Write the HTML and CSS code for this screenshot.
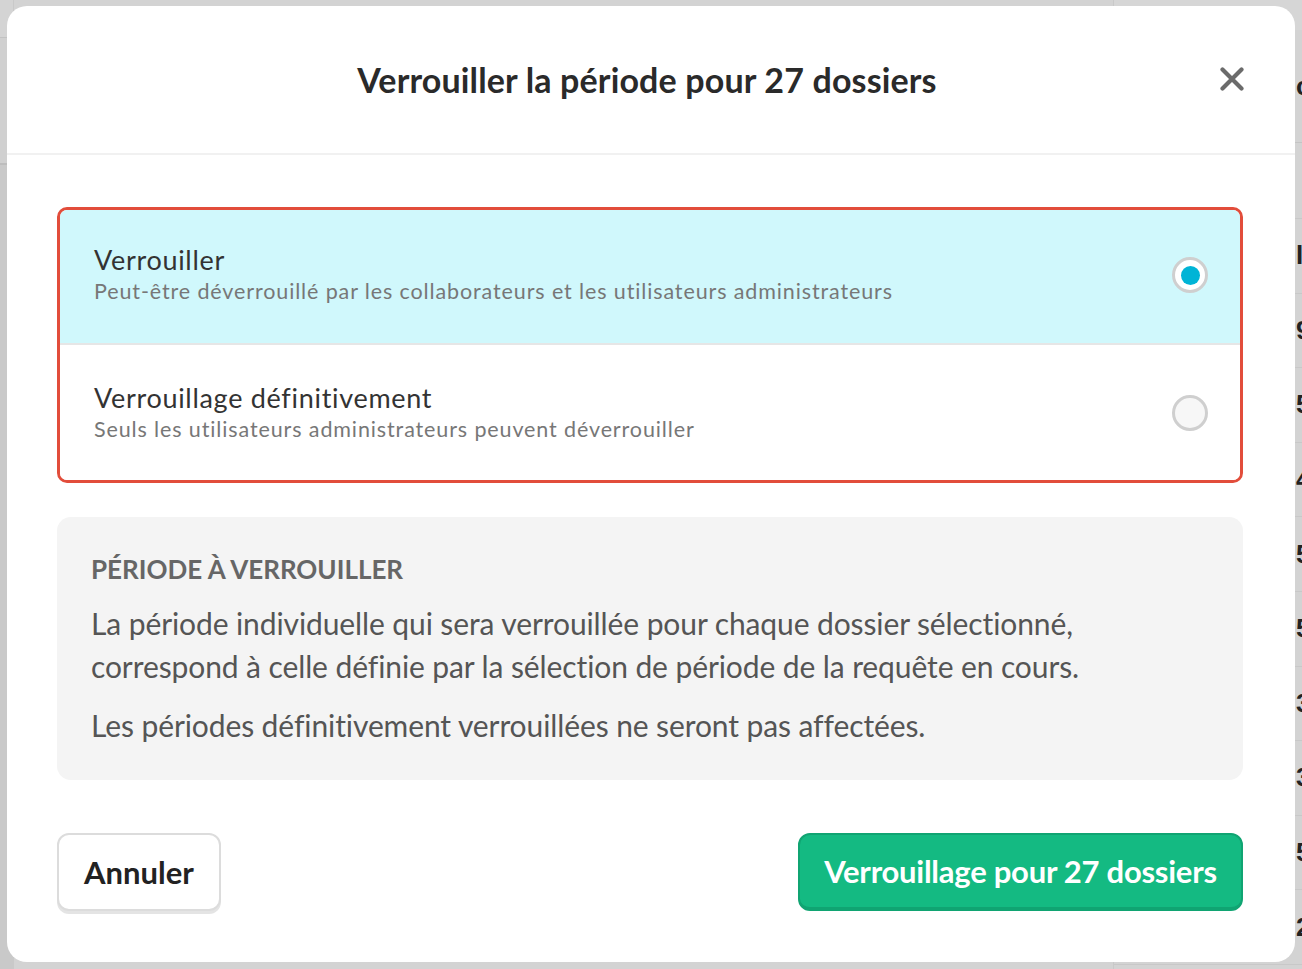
FILE: index.html
```html
<!DOCTYPE html>
<html lang="fr">
<head>
<meta charset="utf-8">
<title>Verrouiller la période</title>
<link rel="stylesheet" href="styles.css">
</head>
<body>
<div class="page-behind">
  <div class="behind-left">
    <div class="left-top"></div>
    <div class="left-mid"></div>
    <div class="left-rest"></div>
  </div>
  <div class="behind-table">
    <div class="behind-head"><span class="cell">c</span></div>
    <div class="behind-band"></div>
    <div class="behind-row"><span class="cell">l</span></div>
    <div class="behind-row"><span class="cell">9</span></div>
    <div class="behind-row"><span class="cell">5</span></div>
    <div class="behind-row"><span class="cell">4</span></div>
    <div class="behind-row"><span class="cell">5</span></div>
    <div class="behind-row"><span class="cell">5</span></div>
    <div class="behind-row"><span class="cell">3</span></div>
    <div class="behind-row"><span class="cell">3</span></div>
    <div class="behind-row"><span class="cell">5</span></div>
    <div class="behind-row"><span class="cell">2</span></div>
  </div>
</div>
<div class="modal" role="dialog">
  <header class="modal-header">
    <h1 class="modal-title">Verrouiller la période pour 27 dossiers</h1>
    <button class="close-btn" aria-label="Fermer">
      <svg width="24" height="24" viewBox="0 0 24 24"><path d="M2.5 2.5 L21.5 21.5 M21.5 2.5 L2.5 21.5" stroke="#6b6b6b" stroke-width="4.2" stroke-linecap="round"/></svg>
    </button>
  </header>
  <div class="modal-body">
    <div class="options">
      <label class="option selected">
        <div class="option-text">
          <div class="option-title">Verrouiller</div>
          <div class="option-sub">Peut-être déverrouillé par les collaborateurs et les utilisateurs administrateurs</div>
        </div>
        <span class="radio checked"><span class="dot"></span></span>
      </label>
      <label class="option">
        <div class="option-text">
          <div class="option-title">Verrouillage définitivement</div>
          <div class="option-sub">Seuls les utilisateurs administrateurs peuvent déverrouiller</div>
        </div>
        <span class="radio"></span>
      </label>
    </div>
    <div class="info">
      <div class="info-heading">PÉRIODE À VERROUILLER</div>
      <p class="info-text">La période individuelle qui sera verrouillée pour chaque dossier sélectionné, correspond à celle définie par la sélection de période de la requête en cours.</p>
      <p class="info-text">Les périodes définitivement verrouillées ne seront pas affectées.</p>
    </div>
    <div class="actions">
      <button class="btn btn-cancel">Annuler</button>
      <button class="btn btn-primary">Verrouillage pour 27 dossiers</button>
    </div>
  </div>
</div>
</body>
</html>
```
FILE: styles.css
```css
* { box-sizing: border-box; }
html, body { margin: 0; padding: 0; }
body {
  background: #d3d3d3;
  font-family: Lato, "Open Sans", "Liberation Sans", sans-serif;
  width: 1302px;
  height: 969px;
  overflow: hidden;
  position: relative;
}

/* page content behind the overlay */
.page-behind {
  display: flex;
  justify-content: space-between;
  height: 969px;
}
.behind-left {
  width: 14px;
  display: flex;
  flex-direction: column;
  border-right: 1px solid #c9c9c9;
}
.left-top {
  height: 38px;
  border-bottom: 1px solid #c2c2c2;
  background: #d4d4d4;
}
.left-mid {
  height: 127px;
  border-bottom: 2px solid #bdbdbd;
  background: #d0d0d0;
}
.left-rest {
  flex: 1;
  background: #c9c9c9;
}
.behind-table {
  width: 189px;
  display: flex;
  flex-direction: column;
  border-left: 1px solid #c9c9c9;
}
.behind-head {
  height: 143px;
  border-top: 30px solid #d6d6d6;
  border-bottom: 1px solid #c4c4c4;
  display: flex;
  align-items: center;
  justify-content: flex-end;
}
.behind-band {
  height: 76px;
  border-bottom: 1px solid #c8c8c8;
}
.behind-row {
  height: 74.6px;
  border-bottom: 1px solid #c8c8c8;
  display: flex;
  align-items: center;
  justify-content: flex-end;
}
.cell {
  font-family: "Liberation Sans", sans-serif;
  font-size: 26px;
  font-weight: 700;
  color: #222;
  width: 7px;
  overflow: hidden;
  text-indent: 1px;
}

/* modal (overlay) */
.modal {
  position: absolute;
  left: 7px;
  top: 6px;
  width: 1288px;
  height: 956px;
  background: #fff;
  border-radius: 20px;
  display: flex;
  flex-direction: column;
}
.modal-header {
  height: 149px;
  border-bottom: 2px solid #f1f1f1;
  display: flex;
  align-items: center;
  justify-content: center;
  position: relative;
}
.modal-title {
  margin: 0;
  font-size: 34px;
  font-weight: 700;
  color: #2a2a2a;
  letter-spacing: 0.15px;
  padding-right: 8px;
}
.close-btn {
  position: absolute;
  right: 51px;
  top: 61px;
  background: none;
  border: 0;
  padding: 0;
  width: 24px;
  height: 24px;
}
.modal-body {
  padding: 52px 52px 0 50px;
  display: flex;
  flex-direction: column;
}
.options {
  border: 3px solid #e24d3b;
  border-radius: 10px;
  overflow: hidden;
}
.option {
  display: flex;
  align-items: center;
  justify-content: space-between;
  padding: 0 32px 0 34px;
  height: 135px;
  background: #fff;
}
.option.selected {
  background: #d0f8fc;
  border-bottom: 2px solid #e6e6e6;
  padding-bottom: 3px;
}
.option-title {
  font-size: 27px;
  color: #333;
  line-height: 32px;
  letter-spacing: 0.7px;
}
.option-sub {
  font-size: 21.5px;
  color: #777;
  line-height: 30px;
  letter-spacing: 0.88px;
}
.radio {
  width: 36px;
  height: 36px;
  border: 3px solid #cfcfcf;
  border-radius: 50%;
  background: #f7f7f7;
  display: flex;
  align-items: center;
  justify-content: center;
}
.radio.checked { background: #fff; }
.dot {
  width: 19px;
  height: 19px;
  border-radius: 50%;
  background: #00b4d6;
}
.info {
  margin-top: 34px;
  background: #f4f4f4;
  border-radius: 14px;
  padding: 37px 110px 32px 34px;
  height: 263px;
}
.info-heading {
  font-size: 26px;
  font-weight: 700;
  color: #666;
  line-height: 30px;
}
.info-text {
  margin: 18px 0 0 0;
  font-size: 30px;
  line-height: 43px;
  color: #555;
  letter-spacing: -0.1px;
}
.info-text + .info-text { margin-top: 16px; }
.actions {
  margin-top: 53px;
  display: flex;
  justify-content: space-between;
}
.btn {
  font-family: Lato, "Open Sans", "Liberation Sans", sans-serif;
  font-weight: 700;
  height: 78px;
  border-radius: 12px;
  cursor: pointer;
}
.btn-cancel {
  width: 164px;
  background: #fff;
  border: 2px solid #dcdcdc;
  box-shadow: 0 3px 0 #e4e4e4;
  font-size: 31px;
  color: #222;
}
.btn-primary {
  width: 445px;
  background: #14ba82;
  border: 2px solid #10a472;
  border-bottom-width: 4px;
  font-size: 31px;
  color: #fff;
  letter-spacing: -0.25px;
}
```
